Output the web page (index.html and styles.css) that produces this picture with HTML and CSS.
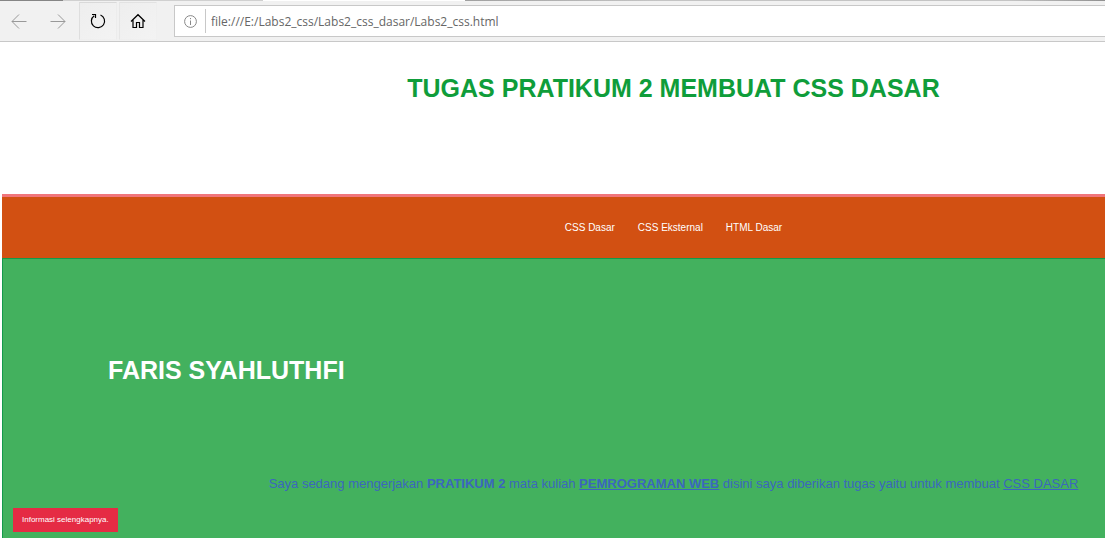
FILE: index.html
```html
<!DOCTYPE html>
<html lang="id">
<head>
<meta charset="utf-8">
<title>Labs2 CSS</title>
<link rel="stylesheet" href="styles.css">
</head>
<body>
<div class="toolbar">
  <div class="tab-edge"><span class="tab-dark"></span><span class="tab-light"></span><span class="tab-active"></span><span class="tab-rest"></span></div>
  <div class="toolbar-row">
    <button class="tool tool-first" type="button" aria-label="Back"><svg width="16" height="16" viewBox="0 0 16 16"><path d="M15.500 8.500H1M8 1.500L1 8.500L8 15.500"/></svg></button>
    <button class="tool" type="button" aria-label="Forward"><svg width="16" height="16" viewBox="0 0 16 16"><path d="M.5 8.500H15M8 1.500L15 8.500L8 15.500"/></svg></button>
    <button class="tool tool-dark tool-boxed" type="button" aria-label="Refresh"><svg width="16" height="16" viewBox="0 0 16 16"><path d="M10.500 2A6.600 6.600 0 1 1 4.200 2.700M2 1.500H5.500V5"/></svg></button>
    <button class="tool tool-dark tool-boxed tool-faint" type="button" aria-label="Home"><svg width="16" height="16" viewBox="0 0 16 16"><path d="M1 8.500L8 1.700L15 8.500M3 7V14.500H6.500V9.500H9.500V14.500H13V7"/></svg></button>
    <div class="address">
      <svg width="13" height="13" viewBox="0 0 13 13"><circle cx="6.500" cy="6.500" r="5.900"/><path d="M6.500 5.500V10M6.500 3V4.200"/></svg>
      <input class="url" type="text" aria-label="Address" value="file:///E:/Labs2_css/Labs2_css_dasar/Labs2_css.html">
    </div>
  </div>
</div>
<div class="page">
  <header class="header"><h1>TUGAS PRATIKUM 2 MEMBUAT CSS DASAR</h1></header>
  <nav class="nav">
    <a href="#dasar">CSS Dasar</a>
    <a href="#eksternal">CSS Eksternal</a>
    <a href="#html">HTML Dasar</a>
  </nav>
  <main class="intro">
    <h2>FARIS SYAHLUTHFI</h2>
    <p>Saya sedang mengerjakan <b>PRATIKUM 2</b> mata kuliah <b><u>PEMROGRAMAN WEB</u></b> disini saya diberikan tugas yaitu untuk membuat <u>CSS DASAR</u></p>
    <a class="button" href="#info">Informasi selengkapnya.</a>
  </main>
</div>
</body>
</html>
```
FILE: styles.css
```css
* { box-sizing: border-box; }

body {
  margin: 0;
  min-height: 100vh;
  display: flex;
  flex-direction: column;
  background: #fff;
  font-family: "Liberation Sans", Arial, sans-serif;
}

.toolbar {
  background: #f1f1f1;
  border-bottom: 1px solid #c8c8c8;
}

.tab-edge { display: flex; height: 1px; }
.tab-dark { width: 63px; background: #858585; }
.tab-light { width: 200px; background: #d0d0d0; }
.tab-active { width: 202px; background: #fff; }
.tab-rest { flex: 1; background: linear-gradient(90deg, #a0a0a0, #c4c4c4 30%, #c4c4c4 85%, #909090); }

.toolbar-row {
  display: flex;
  height: 40px;
}

.tool {
  display: flex;
  align-items: center;
  justify-content: center;
  width: 38px;
  height: 38px;
  margin: 1px 2px 0 0;
  padding: 0;
  border: 1px solid transparent;
  background: none;
}

.tool-first { width: 37px; }

.tool svg, .address svg {
  fill: none;
  stroke: #999;
  flex: none;
}

.tool-dark svg { stroke: #000; stroke-width: 1.2; }

.tool-boxed {
  border-color: #d9d9d9 #ececec transparent #dedede;
  background: linear-gradient(135deg, #eee, #f3f3f3);
}

.tool-faint { border-color: #e2e2e2 transparent transparent #e6e6e6; }

.address {
  display: flex;
  align-items: center;
  flex: 1;
  height: 32px;
  margin: 4px 0 0 15px;
  padding-left: 9px;
  border: 1px solid #c8c8c8;
  border-right: 0;
  background: #fff;
}

.address svg { stroke: #888; }

.url {
  flex: 1;
  height: 24px;
  margin-left: 8px;
  padding: 0 0 0 5px;
  border: 0;
  border-left: 1px solid #c8c8c8;
  background: none;
  color: #666;
  font: 12px "Open Sans", "Noto Sans", sans-serif;
}

.page {
  flex: 1;
  display: flex;
  flex-direction: column;
  padding-left: 2px;
}

.header {
  padding: 31px 0 91px 240px;
  text-align: center;
}

h1, h2 {
  margin: 0;
  font-size: 25px;
  line-height: 30px;
}

h1 { color: #0f9d3a; }

.nav {
  display: flex;
  align-items: center;
  justify-content: center;
  gap: 23px;
  height: 64px;
  padding-left: 240px;
  border-top: 3px solid #f0757b;
  background: #d25012;
}

.nav a {
  color: #fff;
  font-size: 10px;
  text-decoration: none;
}

.intro {
  flex: 1;
  padding: 96px 0 6px 10px;
  border: solid #139a4b;
  border-width: 1px 0 0 1px;
  background: #43b15e;
}

.intro h2 {
  padding-left: 95px;
  color: #fff;
}

.intro p {
  margin: 91px 0 16px;
  padding-left: 229px;
  color: #3b67bd;
  font-size: 13px;
  line-height: 16px;
  text-align: center;
}

.button {
  display: block;
  width: fit-content;
  padding: 0 9px;
  background: #e52b44;
  color: #fff;
  font-size: 8px;
  line-height: 24px;
  text-decoration: none;
}
```
